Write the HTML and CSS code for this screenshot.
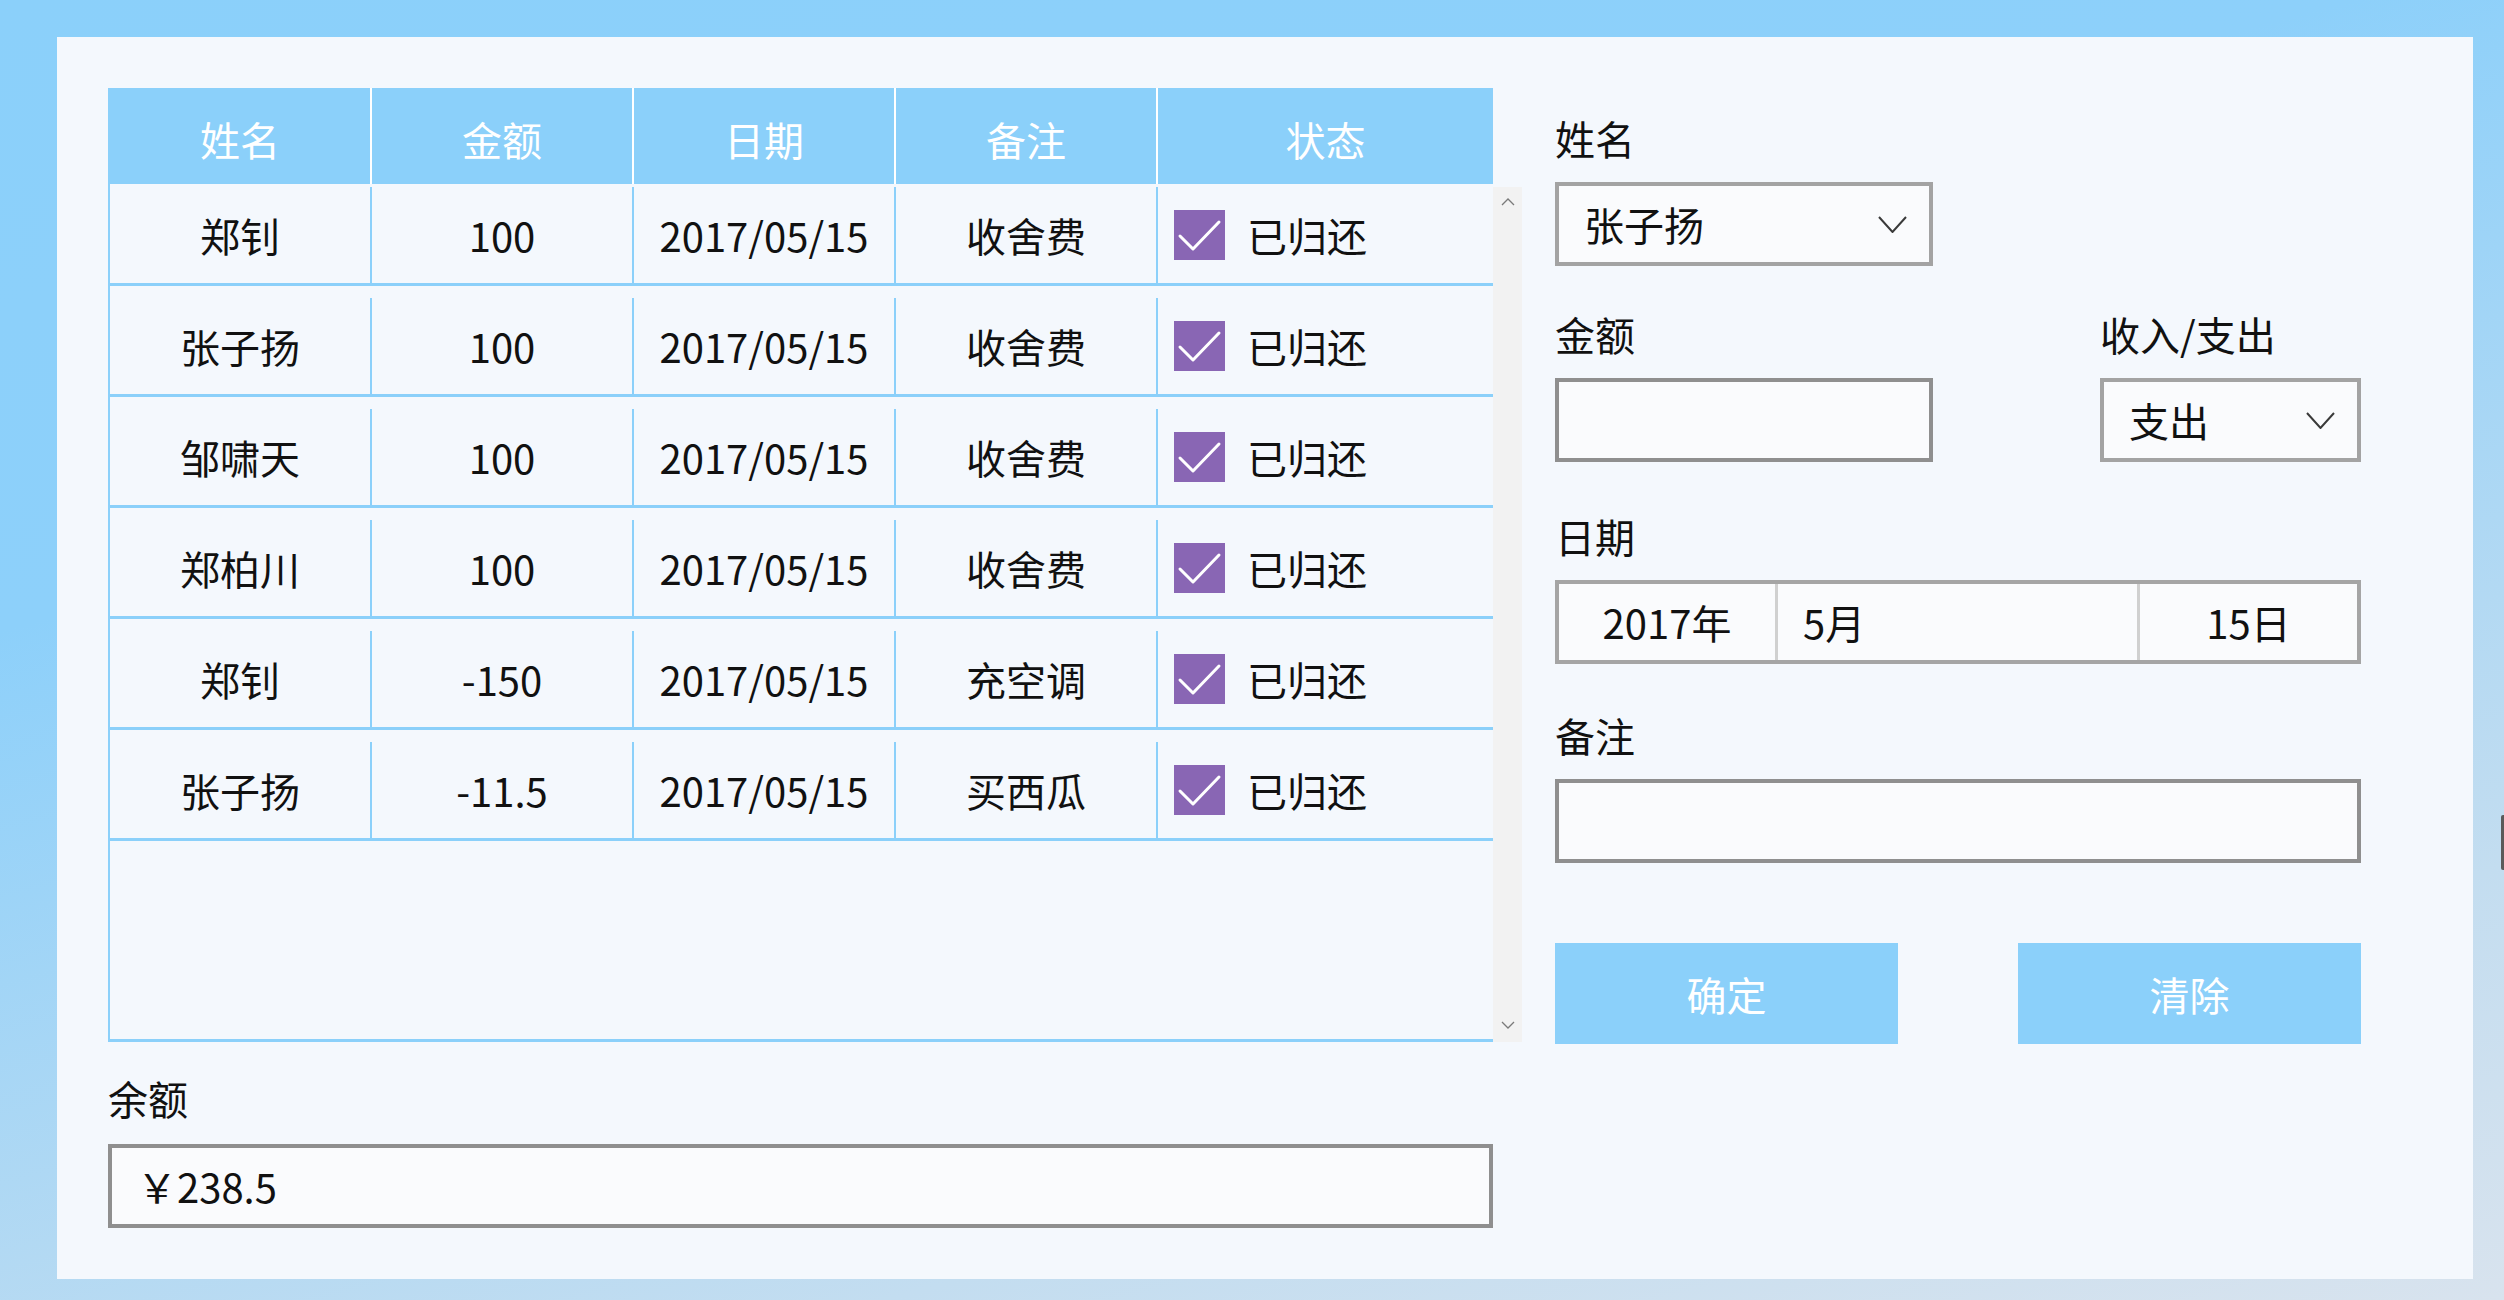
FILE: index.html
```html
<!DOCTYPE html>
<html lang="zh-CN">
<head>
<meta charset="utf-8">
<title>记账本</title>
<link rel="stylesheet" href="styles.css">
</head>
<body>
<div class="window">
  <div class="panel">
    <div class="left">
      <div class="grid">
        <div class="grid-head">
          <div class="hc c1">姓名</div>
          <div class="hc c2">金额</div>
          <div class="hc c3">日期</div>
          <div class="hc c4">备注</div>
          <div class="hc c5">状态</div>
        </div>
        <div class="grid-body">
          <div class="rows">
            <div class="row first">
              <div class="cell c1">郑钊</div>
              <div class="cell c2">100</div>
              <div class="cell c3">2017/05/15</div>
              <div class="cell c4">收舍费</div>
              <div class="cell c5"><span class="check"><svg viewBox="0 0 51 50" width="51" height="50"><polyline points="6,26 19,39 45,12" fill="none" stroke="#fff" stroke-width="3" stroke-linecap="round" stroke-linejoin="round"/></svg></span><span>已归还</span></div>
            </div>
            <div class="row">
              <div class="cell c1">张子扬</div>
              <div class="cell c2">100</div>
              <div class="cell c3">2017/05/15</div>
              <div class="cell c4">收舍费</div>
              <div class="cell c5"><span class="check"><svg viewBox="0 0 51 50" width="51" height="50"><polyline points="6,26 19,39 45,12" fill="none" stroke="#fff" stroke-width="3" stroke-linecap="round" stroke-linejoin="round"/></svg></span><span>已归还</span></div>
            </div>
            <div class="row">
              <div class="cell c1">邹啸天</div>
              <div class="cell c2">100</div>
              <div class="cell c3">2017/05/15</div>
              <div class="cell c4">收舍费</div>
              <div class="cell c5"><span class="check"><svg viewBox="0 0 51 50" width="51" height="50"><polyline points="6,26 19,39 45,12" fill="none" stroke="#fff" stroke-width="3" stroke-linecap="round" stroke-linejoin="round"/></svg></span><span>已归还</span></div>
            </div>
            <div class="row">
              <div class="cell c1">郑柏川</div>
              <div class="cell c2">100</div>
              <div class="cell c3">2017/05/15</div>
              <div class="cell c4">收舍费</div>
              <div class="cell c5"><span class="check"><svg viewBox="0 0 51 50" width="51" height="50"><polyline points="6,26 19,39 45,12" fill="none" stroke="#fff" stroke-width="3" stroke-linecap="round" stroke-linejoin="round"/></svg></span><span>已归还</span></div>
            </div>
            <div class="row">
              <div class="cell c1">郑钊</div>
              <div class="cell c2">-150</div>
              <div class="cell c3">2017/05/15</div>
              <div class="cell c4">充空调</div>
              <div class="cell c5"><span class="check"><svg viewBox="0 0 51 50" width="51" height="50"><polyline points="6,26 19,39 45,12" fill="none" stroke="#fff" stroke-width="3" stroke-linecap="round" stroke-linejoin="round"/></svg></span><span>已归还</span></div>
            </div>
            <div class="row">
              <div class="cell c1">张子扬</div>
              <div class="cell c2">-11.5</div>
              <div class="cell c3">2017/05/15</div>
              <div class="cell c4">买西瓜</div>
              <div class="cell c5"><span class="check"><svg viewBox="0 0 51 50" width="51" height="50"><polyline points="6,26 19,39 45,12" fill="none" stroke="#fff" stroke-width="3" stroke-linecap="round" stroke-linejoin="round"/></svg></span><span>已归还</span></div>
            </div>
          </div>
          <div class="scrollbar">
            <svg class="arrow" viewBox="0 0 14 8" width="14" height="8"><polyline points="1,7 7,1 13,7" fill="none" stroke="#7a7a7a" stroke-width="1.3"/></svg>
            <svg class="arrow" viewBox="0 0 14 8" width="14" height="8"><polyline points="1,1 7,7 13,1" fill="none" stroke="#7a7a7a" stroke-width="1.3"/></svg>
          </div>
        </div>
      </div>
      <div class="label balance-label">余额</div>
      <div class="box balance">￥238.5</div>
    </div>

    <div class="right">
      <div class="field name-field">
        <div class="label">姓名</div>
        <div class="box combo wide"><span>张子扬</span><svg viewBox="0 0 29 17" width="29" height="17"><polyline points="1,1 14.5,16 28,1" fill="none" stroke="#3a3a3a" stroke-width="2"/></svg></div>
      </div>
      <div class="pair">
        <div class="field">
          <div class="label">金额</div>
          <div class="box wide"></div>
        </div>
        <div class="field">
          <div class="label">收入/支出</div>
          <div class="box combo narrow"><span>支出</span><svg viewBox="0 0 29 17" width="29" height="17"><polyline points="1,1 14.5,16 28,1" fill="none" stroke="#3a3a3a" stroke-width="2"/></svg></div>
        </div>
      </div>
      <div class="field date-field">
        <div class="label">日期</div>
        <div class="box date">
          <div class="seg year">2017年</div>
          <div class="seg month">5月</div>
          <div class="seg day">15日</div>
        </div>
      </div>
      <div class="field note-field">
        <div class="label">备注</div>
        <div class="box"></div>
      </div>
      <div class="buttons">
        <div class="btn">确定</div>
        <div class="btn">清除</div>
      </div>
    </div>
  </div>
  <div class="grip"></div>
</div>
</body>
</html>
```

FILE: styles.css
```css
html, body {
  margin: 0;
  padding: 0;
}

body {
  width: 2504px;
  height: 1300px;
  overflow: hidden;
  background: linear-gradient(165deg, #8BD0FA 0%, #8DD0FA 32%, #C3DDF0 78%, #D8E3EE 100%);
  font-family: "Noto Sans CJK SC", "Noto Sans", sans-serif;
  font-size: 40px;
  color: #111;
}

.window {
  position: relative;
  height: 1300px;
  box-sizing: border-box;
  padding: 37px 31px 21px 57px;
}

.panel {
  height: 1242px;
  box-sizing: border-box;
  background: #F4F8FD;
  padding: 51px;
  display: flex;
  gap: 33px;
}

/* ---------- left side ---------- */
.left {
  width: 1414px;
  display: flex;
  flex-direction: column;
}

.grid {
  height: 957px;
  display: flex;
  flex-direction: column;
}

.grid-head {
  width: 1385px;
  height: 96px;
  flex: none;
  box-sizing: border-box;
  display: flex;
  background: #8BD0FA;
  border-left: 2px solid #8BD0FA;
  color: #fff;
}

.hc {
  box-sizing: border-box;
  display: flex;
  align-items: center;
  justify-content: center;
  padding-top: 6px;
  border-right: 2px solid #fff;
  line-height: 40px;
}

.c1, .c2, .c3, .c4 { width: 262px; }
.c5 { width: 335px; }
.hc.c5 { border-right: none; }

.grid-body {
  flex: 1;
  display: flex;
}

.rows {
  width: 1385px;
  box-sizing: border-box;
  border-left: 2px solid #8BD0FA;
  border-bottom: 3px solid #8BD0FA;
}

.row {
  display: flex;
  padding-top: 12px;
  border-bottom: 3px solid #8BD0FA;
}

.row.first { padding-top: 3px; }

.cell {
  height: 96px;
  box-sizing: border-box;
  display: flex;
  align-items: center;
  justify-content: center;
  border-right: 2px solid #8BD0FA;
  line-height: 40px;
}

.cell.c5 {
  border-right: none;
  justify-content: flex-start;
  padding-left: 16px;
}

.check {
  width: 51px;
  height: 50px;
  background: #8966B4;
  margin-right: 22px;
  display: flex;
}

.scrollbar {
  width: 29px;
  margin-top: 3px;
  background: #F2F2F2;
  display: flex;
  flex-direction: column;
  justify-content: space-between;
  align-items: center;
  padding: 11px 0 13px;
  box-sizing: border-box;
}

.label {
  height: 40px;
  line-height: 40px;
  color: #111;
}

.balance-label {
  margin-top: 36px;
  margin-bottom: 26px;
}

.box {
  height: 84px;
  box-sizing: border-box;
  border: 4px solid #8F8F8F;
  background: #FAFBFD;
}

.balance {
  width: 1385px;
  display: flex;
  align-items: center;
  padding-left: 25px;
  line-height: 40px;
}

/* ---------- right side ---------- */
.right {
  width: 806px;
  padding-top: 30px;
  display: flex;
  flex-direction: column;
}

.field .label { margin-bottom: 24px; }

.pair { margin-top: 48px; }
.date-field { margin-top: 54px; }
.note-field { margin-top: 51px; }

.wide { width: 378px; }
.narrow { width: 261px; }

.pair {
  display: flex;
  justify-content: space-between;
}

.combo {
  border-color: #A3A3A3;
  display: flex;
  align-items: center;
  justify-content: space-between;
  padding: 0 22px 0 25px;
  line-height: 40px;
}

.date {
  display: flex;
  border-color: #A5A5A5;
}

.seg {
  display: flex;
  align-items: center;
  line-height: 40px;
}

.seg.year {
  width: 216px;
  justify-content: center;
  border-right: 3px solid #D0D0D0;
}

.seg.month {
  width: 362px;
  padding-left: 25px;
  box-sizing: border-box;
  border-right: 3px solid #D0D0D0;
}

.seg.day {
  flex: 1;
  justify-content: center;
}

.buttons {
  display: flex;
  justify-content: space-between;
  margin-top: 80px;
}

.btn {
  width: 343px;
  height: 101px;
  background: #8BD0FA;
  color: #fff;
  display: flex;
  align-items: center;
  justify-content: center;
  line-height: 40px;
}

.grip {
  position: absolute;
  right: 0;
  top: 815px;
  width: 3px;
  height: 55px;
  background: #5a5a5a;
  border-radius: 2px 0 0 2px;
}
```
